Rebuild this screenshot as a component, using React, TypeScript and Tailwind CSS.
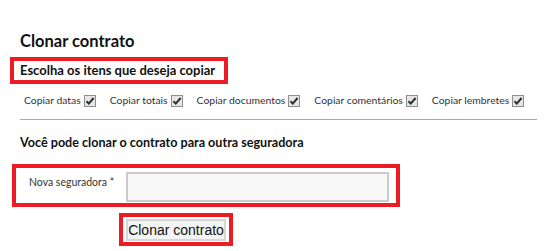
import React from 'react'

const itens = ['Copiar datas', 'Copiar totais', 'Copiar documentos', 'Copiar comentários', 'Copiar lembretes']

function Check() {
  return (
    <svg width="12" height="12" viewBox="0 0 12 12" className="shrink-0">
      <rect x="0.5" y="0.5" width="11" height="11" fill="#e6e6e6" stroke="#8e8e8e" />
      <path d="M2.5 6.2 L4.8 8.6 L9.6 3" fill="none" stroke="#2e2e2e" strokeWidth="2" />
    </svg>
  )
}

export default function App() {
  return (
    <div className="w-[546px] h-[251px] bg-white text-[#111] pt-[31px] pl-[10px]" style={{ fontFamily: 'Lato, "Noto Sans", sans-serif' }}>
      <h2 className="ml-[10px] text-[16.5px] font-bold leading-[20px]">Clonar contrato</h2>
      <div className="mt-[6px] w-[218px] h-[27px] border-4 border-[#ed1c24] pl-[6px] flex items-center">
        <span className="text-[13px] font-bold leading-none">Escolha os itens que deseja copiar</span>
      </div>
      <div className="mt-[9px] ml-[14px] flex items-center gap-[14px] text-[10.4px] text-[#333] h-[16px]">
        {itens.map((t) => (
          <label key={t} className="flex items-center gap-[3px]">
            <span>{t}</span>
            <Check />
          </label>
        ))}
      </div>
      <div className="ml-[10px] mt-[10px] w-[517px] border-t border-[#a8a8a8]" />
      <p className="ml-[10px] mt-[15px] text-[12.6px] font-bold leading-[16px]">Você pode clonar o contrato para outra seguradora</p>
      <div className="ml-[2px] mt-[13px] w-[388px] h-[43px] border-4 border-[#ed1c24] flex items-start pl-[13px] pt-[4px]">
        <span className="text-[10.5px] text-[#333] w-[97px] pt-[3px]">Nova seguradora *</span>
        <input className="w-[263px] h-[30px] bg-[#f8f8f8] border-2 border-[#cbcbcb] outline-none" />
      </div>
      <div className="ml-[109px] mt-[6px] w-[114px] h-[33px] border-4 border-[#ed1c24] flex items-center justify-center">
        <button className="w-[100px] h-[22px] bg-[#f4f4f4] border-2 border-[#d6d6d6] text-[14px] leading-none text-[#111]" style={{ fontFamily: '"Liberation Sans", Arial, sans-serif' }}>
          Clonar contrato
        </button>
      </div>
    </div>
  )
}
